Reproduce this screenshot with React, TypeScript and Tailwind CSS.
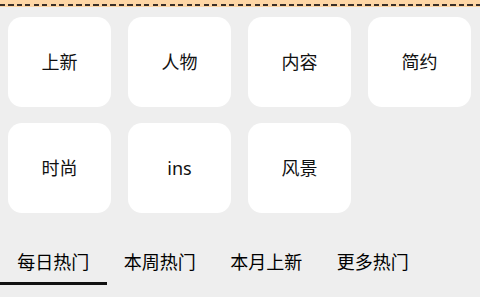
import React from "react";

const cats = ["上新", "人物", "内容", "简约", "时尚", "ins", "风景"];
const tabs = ["每日热门", "本周热门", "本月上新", "更多热门"];

export default function App() {
  return (
    <div
      className="w-[480px] h-[297px] overflow-hidden bg-[#eeeeee] flex flex-col"
      style={{ fontFamily: '"Noto Sans", "Noto Sans CJK SC", sans-serif' }}
    >
      <div className="h-[7px] bg-[#fdd6a6] flex flex-col justify-end pb-[1px]">
        <div
          className="h-[2px] w-full"
          style={{
            backgroundImage:
              "repeating-linear-gradient(to right, #3a2f28 0px, #3a2f28 5px, transparent 5px, transparent 8.5px)",
          }}
        />
      </div>
      <div className="grid grid-cols-[103px_103px_103px_103px] gap-x-[17px] gap-y-[16px] pl-[8px] pt-[10px]">
        {cats.map((c) => (
          <div
            key={c}
            className="h-[90px] bg-white rounded-[14px] flex items-center justify-center text-[18px] text-[#111]"
          >
            {c}
          </div>
        ))}
      </div>
      <div className="flex mt-[29px]">
        {tabs.map((t, i) => (
          <div key={t} className="w-[106.5px] flex flex-col items-center">
            <div className="h-[40px] flex items-center text-[18px] text-[#000]">{t}</div>
            <div className={i === 0 ? "h-[3px] w-full bg-[#111]" : "h-[3px] w-full"} />
          </div>
        ))}
      </div>
    </div>
  );
}
